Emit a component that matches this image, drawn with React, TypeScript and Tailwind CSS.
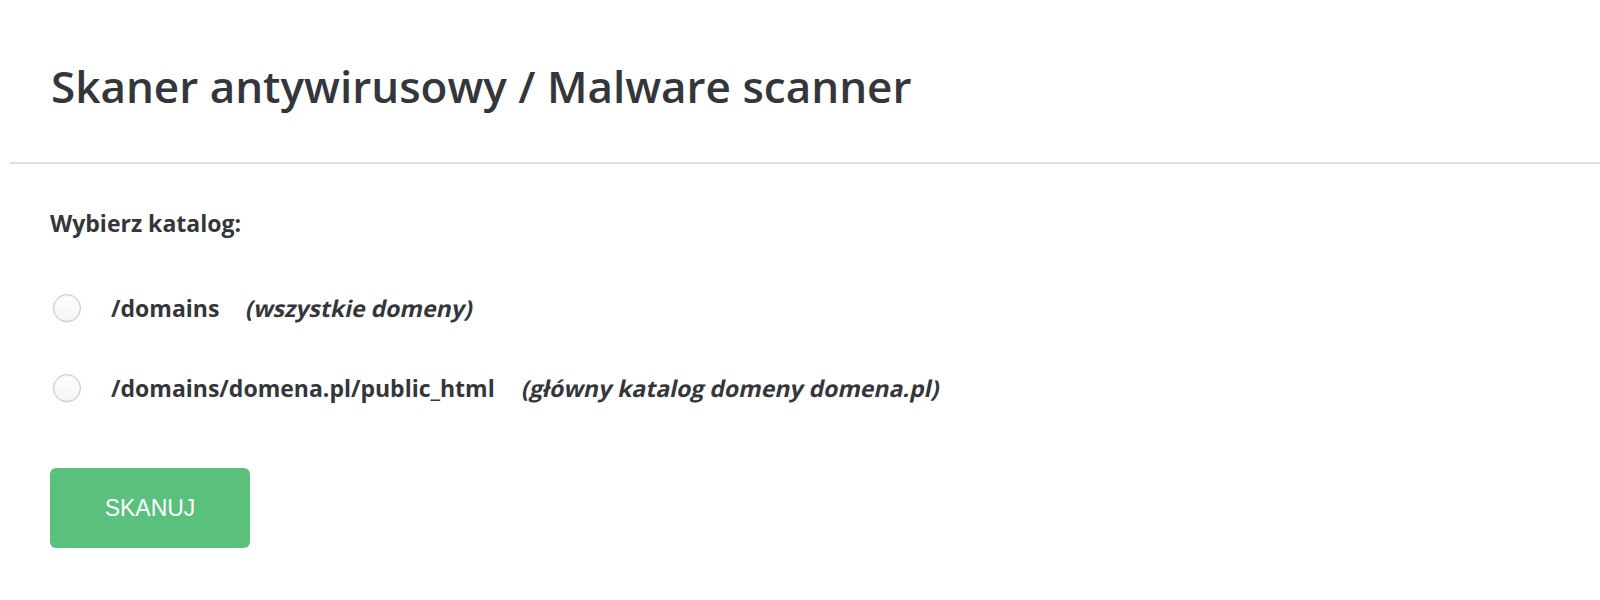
import { useState } from 'react';

const options = [
  { path: '/domains', note: '(wszystkie domeny)' },
  { path: '/domains/domena.pl/public_html', note: '(główny katalog domeny domena.pl)' },
];

export default function App() {
  const [selected, setSelected] = useState<number | null>(null);

  return (
    <div className="min-h-screen bg-white pl-[10px] font-['Open_Sans',sans-serif] text-[#33363b]">
      <div className="pl-[41px] pt-[64px] pb-[54px]">
        <h1 className="text-[44px] leading-[44px] font-semibold">Skaner antywirusowy / Malware scanner</h1>
      </div>
      <div className="h-[2px] bg-[#e0e0e0]" />

      <div className="pl-[40px] pt-[48px]">
        <p className="text-[23px] leading-[22px] font-bold">Wybierz katalog:</p>

        <div className="mt-[54px] flex flex-col gap-[40px]">
          {options.map((opt, i) => (
            <label key={opt.path} className="flex h-[40px] cursor-pointer items-center">
              <span
                onClick={() => setSelected(i)}
                className="ml-[3px] flex h-[28px] w-[28px] items-center justify-center rounded-full border border-[#c6c6c6] bg-gradient-to-b from-white to-[#f4f4f4] shadow-[inset_0_1px_2px_rgba(0,0,0,0.06),0_1px_1px_rgba(0,0,0,0.08)]"
              >
                {selected === i && <span className="h-[12px] w-[12px] rounded-full bg-[#5ac07d]" />}
              </span>
              <span className="ml-[30px] text-[23px] leading-[22px] font-bold">{opt.path}</span>
              <span className="ml-[28px] inline-block skew-x-[-12deg] text-[23px] leading-[22px] font-bold">{opt.note}</span>
            </label>
          ))}
        </div>

        <button className="mt-[60px] h-[80px] w-[200px] rounded-[6px] bg-[#5ac07d] font-['Liberation_Sans',Arial,sans-serif] text-[23px] text-white">
          SKANUJ
        </button>
      </div>
    </div>
  );
}
